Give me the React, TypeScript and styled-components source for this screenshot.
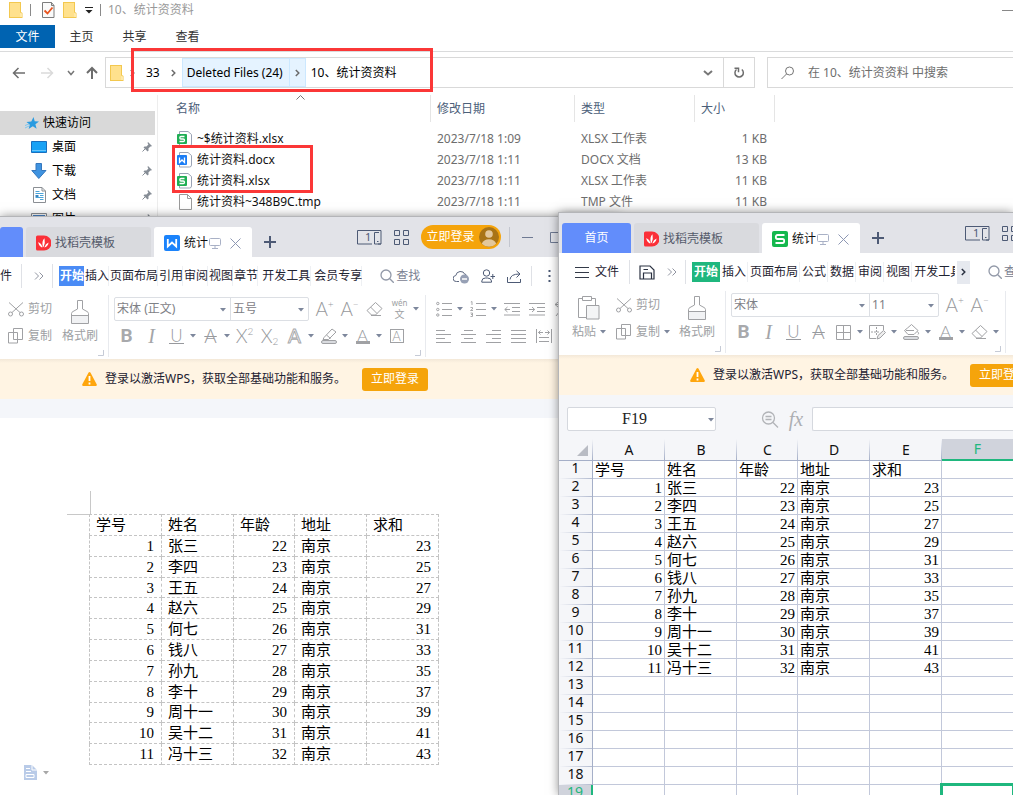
import React from 'react';
import styled, { createGlobalStyle, css } from 'styled-components';

const UI_FONT = '"Noto Sans", "Noto Sans CJK SC", sans-serif';
const SONG_FONT = '"Liberation Serif", "Noto Sans CJK SC", serif';
const ORANGE = '#f5a40b';
const GREEN = '#1fb77e';

const Global = createGlobalStyle`
  * { box-sizing: border-box; }
  body { margin: 0; background: #fff; font: 12px/16px ${UI_FONT}; color: #000; }
  button, input, select { font: inherit; color: inherit; margin: 0; padding: 0; border: 0; background: none; border-radius: 0; outline: 0; }
  button { display: inline-flex; align-items: center; justify-content: center; white-space: nowrap; }
  a { color: inherit; text-decoration: none; }
  svg { display: block; flex: none; }
`;

/* ---------- icons ---------- */

type IconProps = { w: number; h: number; color?: string; children: React.ReactNode; sw?: number };
const Icon = ({ w, h, color = '#a0a1a4', sw = 1, children }: IconProps) => (
  <svg width={w} height={h} viewBox={`0 0 ${w} ${h}`} fill="none" stroke={color} strokeWidth={sw} aria-hidden="true">
    {children}
  </svg>
);

const FolderIcon = () => (
  <Icon w={14} h={16} color="none">
    <path d="M0 0h12v10l1.500 1V16H0z" fill="#f3c84f" />
    <path d="M1 1h10v14H1z" fill="#ffe18d" />
    <path d="M11 10.5l2 1V15h-2z" fill="#ffe9a8" />
  </Icon>
);
const CheckFileIcon = () => (
  <Icon w={13} h={16} color="#7d7d7d">
    <path d="M.5.5h9l2.500 3v12H.5z" fill="#fafafa" />
    <path d="M9.500.5v3H12" />
    <path d="M2.500 8.500l3 3L10.500 5.500" stroke="#e8541e" strokeWidth="1.800" />
  </Icon>
);
const ChevronRight = ({ color = '#6b6b6b' }: { color?: string }) => (
  <Icon w={5} h={8} color={color} sw={1.5}><path d="M.8 1l3 3-3 3" /></Icon>
);
const ChevronDown = ({ w = 8, color = '#777' }: { w?: number; color?: string }) => (
  <Icon w={w} h={6} color={color} sw={w > 8 ? 2 : 1.5}><path d={`M1 1l${w / 2 - 1} 3.500L${w - 1} 1`} /></Icon>
);
const ArrowLeft = () => (
  <Icon w={13} h={12} color="#6d6d6d" sw={1.5}><path d="M13 6H1.500M6.500 1l-5 5 5 5" /></Icon>
);
const ArrowRight = () => (
  <Icon w={13} h={12} color="#dadada" sw={1.5}><path d="M0 6h11.500M6.500 1l5 5-5 5" /></Icon>
);
const ArrowUp = () => (
  <Icon w={12} h={13} color="#6d6d6d" sw={2}><path d="M6 13V2M1 7l5-5 5 5" /></Icon>
);
const RefreshIcon = () => (
  <Icon w={12} h={12} color="#6d6d6d" sw={1.5}>
    <path d="M8.800 2.500A4.200 4.200 0 1 1 3.500 2.500" /><path d="M1.500 1.200h4v4" />
  </Icon>
);
const SearchThin = () => (
  <Icon w={14} h={14} color="#767676"><circle cx="8.500" cy="5" r="4" /><path d="M5.500 8L.5 13" /></Icon>
);
const StarIcon = () => (
  <Icon w={14} h={13} color="none">
    <path d="M8.500 0l1.200 4.200 4.300.3-3.600 2.700 1.200 4.600-3.800-2.600L3.600 12l1.200-4.300L1.500 5l4.800-.6z" fill="#2a9be0" />
    <path d="M0 8.500l4-1.500M0 11l4-2" stroke="#7cc5f0" />
  </Icon>
);
const DesktopIcon = () => (
  <Icon w={16} h={12} color="#1a6fbe"><path d="M.5.5h15v11H.5z" fill="#19a2f5" /><path d="M1 9.500h14" stroke="#6cc6fb" /></Icon>
);
const DownloadIcon = () => (
  <Icon w={16} h={16} color="#3577bd"><path d="M5 .5h5.500v7H15l-7.200 8L.8 7.500H5z" fill="#3f93e0" /></Icon>
);
const DocIcon = () => (
  <Icon w={13} h={16} color="#8b8f94">
    <path d="M.5.5h8.500l3.500 3.500v11.500H.5z" fill="#fff" /><path d="M9 .5V4h3.500" />
    <path d="M2.500 4.500h4M2.500 6.500h8M7 8.500h3.500M2.500 10.500h8M7 12.500h3.500" stroke="#4aa3d8" />
    <path d="M2.500 8h3v2h-3z" fill="#3a86c0" stroke="none" />
  </Icon>
);
const PictureIcon = () => (
  <Icon w={16} h={12} color="#8b8f94"><path d="M.5.5h15v11H.5z" fill="#fff" /><path d="M2 2h12v8H2z" fill="#4b86c9" stroke="none" /></Icon>
);
const PinIcon = () => (
  <Icon w={10} h={10} color="none">
    <path d="M6 0l4 4-1 .6-.6-.2-2 2.200.2 1.900-1 1L1.500 5.400l1-1 2 .2L6.400 2.400 5.500 1z" fill="#868d96" />
    <path d="M3.500 6.500L.5 9.500" stroke="#868d96" />
  </Icon>
);

const SheetFileIcon = () => (
  <Icon w={15} h={16} color="none">
    <path d="M2.500.5H11l3.500 3V13q0 2-2 2h-10z" fill="#fff" stroke="#9aa3b5" />
    <rect x="0" y="3" width="10" height="10" rx="1" fill="#1fae54" />
    <path d="M7.500 5.500H4Q2.800 5.500 2.800 6.700T4 8h2.200Q7.500 8 7.500 9.200T6.200 10.500H2.500" stroke="#fff" strokeWidth="1.300" />
  </Icon>
);
const WordFileIcon = () => (
  <Icon w={15} h={16} color="none">
    <path d="M2.500.5H11l3.500 3V13q0 2-2 2h-10z" fill="#fff" stroke="#9aa3b5" />
    <rect x="0" y="3" width="10" height="10" rx="1" fill="#1b7df5" />
    <path d="M2.500 5.500v5L5 8l2.500 2.500v-5" stroke="#fff" strokeWidth="1.300" />
  </Icon>
);
const BlankFileIcon = () => (
  <Icon w={15} h={16} color="#9a9a9a"><path d="M2.500.5h8l4 4v11h-12z" fill="#fff" /><path d="M10.500.5v4h4" /></Icon>
);

const DocerLogo = () => (
  <Icon w={15} h={16} color="none">
    <path d="M1.500.5H8A7.500 7.500 0 0 1 8 15.500H1.500Q0 15.500 0 14V2Q0 .5 1.500.5z" fill="#fb3038" />
    <path d="M6.800 11.500Q5.500 6 8.500 3.200 9.500 8 7.600 12zM6 12.500Q2.500 10.500 2.300 7 5.500 8.500 6.600 12zM8.500 12.500q3.800-1.500 4-5-3 1-4 4.500z" fill="#fff" />
  </Icon>
);
const WriterLogo = () => (
  <Icon w={16} h={16} color="none">
    <rect width="16" height="16" rx="2" fill="#1b83fb" />
    <path d="M3.800 4v7.500L8 7.500l4.200 4V4" stroke="#fff" strokeWidth="1.800" />
  </Icon>
);
const SheetLogo = () => (
  <Icon w={16} h={16} color="none">
    <rect width="16" height="16" rx="2" fill="#15b84e" />
    <path d="M12.500 4H5.500Q3.800 4 3.800 6t1.700 2h5q1.700 0 1.700 2t-1.700 2h-7" stroke="#fff" strokeWidth="1.800" />
  </Icon>
);
const MonitorIcon = () => (
  <Icon w={12} h={12} color="#a9b1c6"><rect x=".5" y="1.500" width="11" height="7" rx="1" /><path d="M6 8.500v3M3 11.500h6" /></Icon>
);
const CloseIcon = () => <Icon w={11} h={11} color="#8d97b3"><path d="M.5.5l10 10M10.500.5l-10 10" /></Icon>;
const PlusIcon = () => <Icon w={12} h={12} color="#4d5a75" sw={2}><path d="M6 0v12M0 6h12" /></Icon>;
const DeviceIcon = () => (
  <Icon w={25} h={15} color="#4d5a75">
    <path d="M15 14H.5V.5h23.500V14h-3" /><path d="M22 2.500h-4.500V14h6.500M20 11.500h1.500" />
    <text x="8" y="11" fontSize="11" fill="#4d5a75" stroke="none">1</text>
  </Icon>
);
const GridIcon = () => (
  <Icon w={15} h={15} color="#4d5a75">
    <path d="M.5.5h5v5h-5zM9.500.5h5v5h-5zM.5 9.500h5v5h-5zM9.500 9.500h5v5h-5z" />
  </Icon>
);
const Avatar = () => (
  <Icon w={20} h={20} color="none">
    <circle cx="10" cy="10" r="10" fill="#a97416" /><circle cx="10" cy="7" r="3.800" fill="#e3c79a" />
    <path d="M2.800 16.800Q4.500 12.200 10 12.200t7.200 4.600A10 10 0 0 1 2.800 16.800z" fill="#e3c79a" />
  </Icon>
);
const MoreIcon = () => <Icon w={10} h={8} color="#9094a0"><path d="M1 .5l3.500 3.500L1 7.500M5.500.5L9 4 5.500 7.500" /></Icon>;
const HamburgerIcon = () => <Icon w={14} h={11} color="#333a48"><path d="M0 .5h14M0 5.500h14M0 10.500h14" /></Icon>;
const SaveIcon = () => (
  <Icon w={16} h={15} color="#2b3242" sw={1.2}><path d="M1 1h10l4 4v9H1zM4.500 14V8h8v6M4.500 4.500H9" /></Icon>
);
const SearchIcon = () => (
  <Icon w={14} h={14} color="#9299a8" sw={1.3}><circle cx="6" cy="6" r="5" /><path d="M9.800 9.800l4 4" /></Icon>
);
const CloudIcon = () => (
  <Icon w={16} h={15} color="#5d6880">
    <path d="M6 12.500H3.500A3 3 0 0 1 2.800 6.500 4.800 4.800 0 0 1 12 5.500" /><path d="M12 5q1.200.5 1.500 1.500" />
    <circle cx="11.500" cy="10" r="4.500" fill="#97a0b5" stroke="none" /><path d="M9 10h5" stroke="#fff" strokeWidth="1.500" />
  </Icon>
);
const UserAddIcon = () => (
  <Icon w={14} h={14} color="#4d5a75">
    <circle cx="5.500" cy="4" r="3.200" /><path d="M10.500 13.200H.8V12Q1 9 4.500 9h2q3.500 0 4 3zM9.500 7.500h4.500M11.800 5v5" />
  </Icon>
);
const ShareIcon = () => (
  <Icon w={14} h={13} color="#4d5a75"><path d="M.5 7v5.500h13V9M3 9.500Q3.500 4 12.500 4M9.500.8L13 4 9.500 7.500" /></Icon>
);
const ScissorsIcon = () => (
  <Icon w={16} h={15}><circle cx="2.500" cy="12" r="2" /><circle cx="13.500" cy="12" r="2" /><path d="M1 .5l11 10M15 .5L4 10.500" /></Icon>
);
const CopyIcon = () => (
  <Icon w={16} h={16}><path d="M5.500.5h9v11h-9z" /><path d="M.5 4.500h9v10.500h-9z" fill="#fff" /><path d="M5.500 4.500v7h4" /></Icon>
);
const BrushIcon = () => (
  <Icon w={18} h={24}>
    <path d="M1 15.500h16V23H1z" fill="#f1f2f4" stroke="none" />
    <path d="M6.500.5h5V9l4.500 2.500q1.500.8 1.500 2V23.500H.5v-10q0-1.200 1.500-2L6.500 9zM.5 15.500h17" />
  </Icon>
);
const PasteIcon = () => (
  <Icon w={22} h={24}>
    <path d="M4 2.500H.5v19h8M14 2.500h3.500V9M4.500.5h9v4h-9z" /><path d="M8.500 9.500h12.500v13.500H8.500z" fill="#f4f5f6" />
  </Icon>
);
const EraserIcon = () => (
  <Icon w={17} h={16}><path d="M1 9.500l8.500-8 6.500 6-6.500 6.500H5.500zM4.500 6l6.500 6.500" /><path d="M5 14.500h10" /></Icon>
);
const BulletsIcon = () => (
  <Icon w={16} h={16}>
    <path d="M6 2.500h10M6 8.500h10M6 14.500h10" /><circle cx="1.800" cy="2.500" r="1.200" /><circle cx="1.800" cy="8.500" r="1.200" /><circle cx="1.800" cy="14" r="1.200" />
  </Icon>
);
const NumbersIcon = () => (
  <Icon w={16} h={16}>
    <path d="M6 2.500h10M6 8.500h10M6 14.500h10" />
    <path d="M.8 1L2 .5V4M.5 6.500h2v1.500l-2 1.500h2.500M.5 12h2v3.500h-2M1 13.500h1.500" strokeWidth=".9" />
  </Icon>
);
const OutdentIcon = () => (
  <Icon w={16} h={14}><path d="M0 1.500h16M8 5.500h8M8 9.500h8M0 13h16M6 7.500H.8M3.500 5L.8 7.500 3.500 10" /></Icon>
);
const IndentIcon = () => (
  <Icon w={16} h={14}><path d="M0 1.500h16M8 5.500h8M8 9.500h8M0 13h16M0 7.500h5.500M3 5l2.700 2.500L3 10" /></Icon>
);
const DirectionIcon = () => <Icon w={16} h={15}><path d="M10 2.500H1M4 0L1 2.500 4 5M12 1L2 14M7 7l6 7" /></Icon>;
const AlignIcon = ({ lines }: { lines: [number, number][] }) => (
  <Icon w={15} h={14}>{lines.map(([a, b], i) => <path key={i} d={`M${a} ${i * 4 + 1}.500H${b}`} />)}</Icon>
);
const DistributeIcon = () => (
  <Icon w={16} h={14}><path d="M.5 0v14M15.500 0v14M3 8.500h10M3 12.500h10M2.500 3.500H7M9 3.500h4.500M4.500 1.500l-2 2 2 2M11.500 1.500l2 2-2 2" /></Icon>
);
const HighlightIcon = () => (
  <Icon w={16} h={16}><path d="M3 9.500l8-8.500 4 3-7.500 7.500H2zM5.500 7l4 3.500" /><rect x=".5" y="12.500" width="15" height="3" rx="1.500" fill="#d9dbdf" /></Icon>
);
const BordersIcon = () => <Icon w={15} h={15}><path d="M.5.5h14v14H.5zM7.500 0v15M0 7.500h15" /></Icon>;
const CellStyleIcon = () => (
  <Icon w={17} h={15}>
    <path d="M7 13.500H.5V.5h14V5" /><path d="M2 7h8M7.500 2v8" strokeDasharray="2 1" />
    <path d="M8 14l1-3.500 5.500-5 2 2-5.500 5.500z" fill="#eee" />
  </Icon>
);
const FillIcon = () => (
  <Icon w={17} h={16}>
    <path d="M4.500 4l4-3.500L15 6.500 11 10.500H5L1.500 6.500z" /><path d="M3 6.500h8M14.500 7.500q2 2 .5 3" />
    <rect x=".5" y="12.500" width="15" height="3" rx="1.500" fill="#d9dbdf" />
  </Icon>
);
const WarnIcon = () => (
  <Icon w={15} h={14} color="none">
    <path d="M6.600.6q.9-1.200 1.800 0L14.800 12.500Q15 14 13.800 14H1.200Q0 14 .2 12.500z" fill="#ffa60d" />
    <path d="M7.500 4v5M7.500 10.500v2" stroke="#fff" strokeWidth="1.800" />
  </Icon>
);
const Caret = ({ color = '#7d879c' }: { color?: string }) => (
  <Icon w={6} h={4} color="none"><path d="M0 0h6L3 3.500z" fill={color} /></Icon>
);
const CornerIcon = () => <Icon w={6} h={6} color="#c6cbd6"><path d="M0 5.500h5.500V0" /></Icon>;
const ZoomOutIcon = () => (
  <Icon w={18} h={17} color="#b2b4b8" sw={1.3}><circle cx="7.500" cy="7" r="6" /><path d="M4.500 5.500h6M4.500 8.500h6M12 11.500l5 5" /></Icon>
);
const PasteOptionsIcon = () => (
  <Icon w={13} h={15} color="none">
    <path d="M0 0h8l5 5v10H0z" fill="#b9cbe8" /><path d="M8 0v5h5M2 3.500h4M2 6.500h5M2 9.500h8v3H2z" stroke="#fff" />
  </Icon>
);

/* ---------- desktop and Explorer ---------- */

const Desktop = styled.div`
  position: relative; height: 100vh; overflow: hidden; background: #fff;
`;
const ExplorerTitle = styled.header`
  display: flex; align-items: center; height: 20px; padding-left: 9px; color: #999; gap: 7px;
`;
const Spacer = styled.div`flex: 1;`;
const VLine = styled.span<{ $h?: number; $c?: string; $l?: number; $r?: number }>`
  flex: none; width: 1px; height: ${p => p.$h ?? 12}px; background: ${p => p.$c ?? '#8a8a8a'};
  margin: 0 ${p => p.$r ?? 0}px 0 ${p => p.$l ?? 0}px;
`;
const QuickButtons = styled.div`display: flex; align-items: center; gap: 8px; padding-left: 4px;`;
const MinButton = styled.button`width: 11px; height: 16px;`;
const ExplorerTabs = styled.nav`
  display: flex; height: 27px; margin-top: 5px; border-bottom: 1px solid #dadbdc;
`;
const ExplorerTab = styled.button<{ $file?: boolean }>`
  width: ${p => (p.$file ? 55 : 53)}px; height: 23px; color: #333;
  ${p => p.$file && css`background: #0063b1; color: #fff;`}
`;
const AddressRow = styled.div`display: flex; height: 31px; margin-top: 5px;`;
const NavButtons = styled.div`
  display: flex; align-items: center; width: 105px; padding-left: 12px;
  & > :nth-child(2) { margin-left: 16px; }
  & > :nth-child(3) { margin-left: 13px; }
  & > :nth-child(4) { margin-left: 11px; }
`;
const AddressBox = styled.div`
  display: flex; align-items: center; flex: 1; min-width: 0; border: 1px solid #d9d9d9; padding-left: 4px;
`;
const Crumbs = styled.nav`display: flex; align-items: center; height: 100%; flex: 1; white-space: nowrap;`;
const Crumb = styled.a<{ $hot?: boolean }>`
  display: flex; align-items: center; height: 29px; padding: 0 5px;
  ${p => p.$hot && css`background: #e5f3ff; border: 1px solid #cce8ff; padding: 0 6px 0 4px;`}
`;
const CrumbArrow = styled.span<{ $hot?: boolean }>`
  display: flex; align-items: center; justify-content: center; height: 29px; width: ${p => (p.$hot ? 16 : 17)}px;
  ${p => p.$hot && css`background: #e5f3ff; border: 1px solid #cce8ff; border-left: 0;`}
`;
const BoxButton = styled.button<{ $line?: boolean }>`
  width: 31px; height: 29px; ${p => p.$line && css`border-left: 1px solid #d9d9d9;`}
`;
const SearchBox = styled.label`
  display: flex; align-items: center; gap: 13px; width: 246px; margin-left: 12px; padding-left: 13px;
  border: 1px solid #d9d9d9; border-right: 0;
  input { flex: 1; min-width: 0; }
  input::placeholder { color: #6d6d6d; opacity: 1; }
`;
const ExplorerBody = styled.div`display: flex; margin-top: 7px;`;
const Sidebar = styled.aside`width: 158px; padding: 16px 2px 0 0; border-right: 1px solid #ededed;`;
const SideRoot = styled.a`
  display: flex; align-items: center; gap: 4px; height: 24px; padding-left: 25px; background: #d9d9d9;
`;
const SideItem = styled.a`
  display: grid; grid-template-columns: 16px 1fr 10px; align-items: center; column-gap: 5px;
  height: 24px; padding: 0 3px 0 31px;
  svg { justify-self: center; }
`;
const FileTable = styled.table`
  border-collapse: separate; border-spacing: 0; table-layout: fixed; width: 617px; align-self: flex-start;
  tbody::before { content: ''; display: block; height: 6px; }
`;
const HeadCell = styled.th<{ $w: number }>`
  position: relative; width: ${p => p.$w}px; height: 27px; padding: 0 6px; text-align: left; font-weight: 400; color: #4c607a;
  border-right: 1px solid #e5e5e5;
  &:first-child { padding-left: 18px; }
`;
const SortMark = styled.span`position: absolute; top: 0; left: 138px;`;
const FileCell = styled.td<{ $right?: boolean }>`
  height: 21px; padding: 0 8px 0 6px; color: #6d6d6d; white-space: nowrap; text-align: ${p => (p.$right ? 'right' : 'left')};
`;
const FileName = styled.a`
  display: flex; align-items: center; gap: 5px; padding-left: 13px; color: #111;
`;
const Marker = styled.div<{ $x: number; $y: number; $w: number; $h: number }>`
  position: absolute; left: ${p => p.$x}px; top: ${p => p.$y}px; width: ${p => p.$w}px; height: ${p => p.$h}px;
  border: 3px solid #fb3737; pointer-events: none;
`;

/* ---------- WPS windows ---------- */

const WpsWindow = styled.section<{ $x: number; $y: number; $w?: number }>`
  position: absolute; left: ${p => p.$x}px; top: ${p => p.$y}px; bottom: 0;
  ${p => (p.$w ? css`width: ${p.$w}px;` : css`right: 0;`)}
  display: flex; flex-direction: column; background: #fff; overflow: hidden;
  box-shadow: 0 0 0 1px #b4b5b8, 0 0 10px rgba(0, 0, 0, 0.5);
`;
const TitleBar = styled.header`
  display: flex; align-items: flex-end; flex: none; height: 40px; background: #e2e3e8;
`;
const HomeTab = styled.button<{ $w: number; $l?: number }>`
  flex: none; width: ${p => p.$w}px; margin-left: ${p => p.$l ?? 0}px; height: 30px; background: #628dfb; color: #fff; border-radius: 3px 3px 0 0;
`;
const DocTab = styled.button<{ $active?: boolean; $w: number }>`
  flex: none; justify-content: flex-start; gap: 4px; width: ${p => p.$w}px; height: 30px; margin-left: 3px; padding: 2px 10px 0;
  border-radius: 3px 3px 0 0; background: ${p => (p.$active ? '#fff' : '#d9dade')}; color: ${p => (p.$active ? '#111' : '#555b6b')};
  & > :nth-child(3) { margin-left: -3px; }
  & > :nth-child(4) { margin-left: 5px; }
`;
const NewTab = styled.button`flex: none; width: 35px; height: 30px;`;
const TitleTools = styled.div`
  display: flex; align-items: center; gap: 12px; height: 40px; margin-left: 70px; flex: none;
`;
const LoginPill = styled.button`
  gap: 4px; width: 80px; height: 24px; padding-left: 3px; border-radius: 12px; background: ${ORANGE}; color: #fff;
`;
const MenuRow = styled.div<{ $l: number }>`
  display: flex; align-items: center; flex: none; height: 38px; padding-left: ${p => p.$l}px; color: #1f2432; white-space: nowrap;
`;
const MenuButton = styled.button<{ $l?: number; $gap?: number; $c?: string }>`
  flex: none; gap: ${p => p.$gap ?? 0}px; margin-left: ${p => p.$l ?? 0}px; height: 24px; color: ${p => p.$c ?? 'inherit'};
`;
const RibbonTabs = styled.nav<{ $w?: number }>`
  display: flex; flex: none; overflow: hidden; ${p => p.$w && css`width: ${p.$w}px;`}
`;
const RibbonTab = styled.button<{ $active?: string; $l: number; $r: number }>`
  flex: none; height: 20px; padding: 0 ${p => p.$r}px 0 ${p => p.$l}px; box-shadow: inset -1px 0 #eef0f3;
  ${p => p.$active && css`background: ${p.$active}; color: #fff; font-weight: 700; box-shadow: none;`}
`;
const MoreTabs = styled.button`flex: none; width: 13px; height: 23px; margin-left: 2px; background: #e6e9ef;`;
const Ribbon = styled.div`
  display: flex; flex: none; height: 64px; padding-bottom: 2px; color: #9d9fa3; white-space: nowrap;
`;
const Group = styled.div<{ $l: number; $r?: number; $last?: boolean }>`
  position: relative; display: flex; flex: none; padding: 1px ${p => p.$r ?? 0}px 0 ${p => p.$l}px;
  border-right: ${p => (p.$last ? 'none' : '1px solid #e8eaee')};
`;
const Corner = styled.span`position: absolute; right: 4px; bottom: 1px;`;
const Stack = styled.div`display: flex; flex-direction: column; gap: 1px;`;
const Line = styled.div`display: flex; align-items: center; height: 26px;`;
const SmallButton = styled.button<{ $l?: number }>`
  gap: 4px; height: 26px; justify-content: flex-start; margin-left: ${p => p.$l ?? 0}px;
`;
const BigButton = styled.button<{ $l: number }>`
  flex-direction: column; align-items: center; justify-content: flex-start; gap: 4px; margin-left: ${p => p.$l}px; padding-top: 4px; height: 53px;
`;
const Label = styled.span`display: flex; align-items: center; gap: 4px;`;
const Tool = styled.button<{ $l?: number; $caret?: boolean }>`
  flex: none; display: grid; grid-template-columns: 25px ${p => (p.$caret ? '9px' : '')}; align-items: center; height: 26px;
  margin-left: ${p => p.$l ?? 0}px; justify-items: center;
  & > svg:nth-child(2) { justify-self: start; margin-left: 1px; }
`;
const Glyph = styled.span<{ $bold?: boolean; $italic?: boolean; $line?: string; $outline?: boolean; $box?: boolean; $bar?: boolean }>`
  font: 300 19px/20px Lato, sans-serif; color: #97999d;
  ${p => p.$bold && css`font: 700 19px/20px Roboto, sans-serif; color: #a8a9ac;`}
  ${p => p.$italic && css`font: italic 400 20px/20px "Liberation Serif", serif; color: #a4a5a8;`}
  ${p => p.$line === 'under' && css`font-size: 17px; line-height: 14px; padding: 0 1px; border-bottom: 1px solid #97999d;`}
  ${p => p.$line === 'through' && css`text-decoration: line-through; text-decoration-thickness: 1px;`}
  ${p => p.$outline && css`color: #fff; font-weight: 400; -webkit-text-stroke: 1px #a8a9ac;`}
  ${p => p.$box && css`width: 14px; font-size: 13px; line-height: 12px; border: 1px solid #a0a1a4; text-align: center;`}
  ${p => p.$bar && css`width: 14px; text-align: center; font-size: 16px; line-height: 12px; border-bottom: 3px solid #a0a1a4;`}
  sup, sub { font-size: 10px; line-height: 0; }
  sup { vertical-align: 8px; }
  sub { vertical-align: -2px; }
`;
const Pinyin = styled.span`
  display: flex; flex-direction: column; align-items: center; font-size: 8px; line-height: 10px;
  span { font-size: 10px; line-height: 12px; }
`;
const FontBox = styled.div`
  display: flex; height: 24px; border: 1px solid #dcdfe4; border-radius: 2px;
`;
const Picker = styled.div<{ $w: number }>`
  position: relative; width: ${p => p.$w}px;
  & + & { border-left: 1px solid #dcdfe4; }
  select { appearance: none; width: 100%; height: 22px; padding-left: 2px; color: #7e8085; }
  svg { position: absolute; right: 4px; top: 10px; }
`;
const Notice = styled.div<{ $l: number }>`
  display: flex; align-items: center; flex: none; height: 40px; padding-left: ${p => p.$l}px; white-space: nowrap; color: #1c2130;
  background: linear-gradient(#f3e8d8, #fff4e3 4px);
`;
const NoticeText = styled.span`flex: none; margin-left: 8px; width: 257px;`;
const LoginButton = styled.button`
  flex: none; width: 66px; height: 23px; border-radius: 3px; background: ${ORANGE}; color: #fff;
`;
const DocCanvas = styled.main`
  flex: 1; padding-top: 19px; background: #f4f6fa;
`;
const Paper = styled.div`min-height: 100%; padding: 73px 0 0 67px; background: #fff;`;
const CropMark = styled.div`width: 24px; height: 23px; border-right: 1px solid #c8c8c8;`;
const CropLine = styled.div`width: 22px; height: 1px; background: #c8c8c8;`;
const TableRow = styled.div`display: flex; align-items: flex-start;`;
const DocTable = styled.table`
  width: 350px; height: 251px; table-layout: fixed; border-collapse: collapse; font: 15px/18px ${SONG_FONT};
  th, td { padding: 0 6px; border: 1px dashed #c4c4c4; font-weight: 400; text-align: left; white-space: nowrap; }
  th { height: 21px; }
  td:nth-child(odd) { padding-right: 7px; text-align: right; }
`;
const PasteOptions = styled.button`gap: 6px; margin: 0 0 0 -43px;`;
const FormulaBar = styled.div`
  display: flex; align-items: center; flex: none; height: 44px; padding: 4px 0 0 8px; background: #f5f6f9;
`;
const NameBox = styled.label`
  position: relative; width: 149px; height: 24px;
  input { width: 100%; height: 24px; padding-right: 14px; text-align: center; background: #fff; border: 1px solid #d5d8de; border-radius: 2px; font: 16px/20px ${SONG_FONT}; color: #222; }
  svg { position: absolute; right: 2px; top: 11px; }
`;
const Fx = styled.button`
  width: 26px; margin: 0 3px 0 4px; font: italic 20px/24px "Liberation Serif", serif; color: #adafb3;
`;
const FormulaInput = styled.input`
  flex: 1; min-width: 0; height: 24px; background: #fff; border: 1px solid #d5d8de; border-right: 0; border-radius: 2px 0 0 2px;
`;
const Iconic = styled.button<{ $l: number }>`flex: none; margin-left: ${p => p.$l}px;`;
const Grid = styled.table`
  width: 100%; table-layout: fixed; border-collapse: separate; border-spacing: 0; background: #fff;
`;
const ColHead = styled.th<{ $w?: number; $on?: boolean }>`
  ${p => p.$w && css`width: ${p.$w}px;`}
  height: 22px; padding: 0; font: 14px/18px ${UI_FONT}; color: ${p => (p.$on ? GREEN : '#111')};
  border-bottom: ${p => (p.$on ? `2px solid ${GREEN}` : '1px solid #a5afc8')};
  background: ${p => (p.$on ? '#d0d3dc' : 'linear-gradient(#f5f6f9, #a5afc8) right / 1px 100% no-repeat, #f5f6f9')};
  svg { margin: 3px 4px 0 auto; }
`;
const RowHead = styled.th<{ $on?: boolean }>`
  height: 18px; padding: 0 0 4px; font: 14px/14px ${UI_FONT}; color: ${p => (p.$on ? GREEN : '#111')};
  border-right: ${p => (p.$on ? `2px solid ${GREEN}` : '1px solid #a5afc8')};
  background: ${p => (p.$on ? '#d0d3dc' : 'linear-gradient(90deg, #f5f6f9, #b3bbd0) bottom / 100% 1px no-repeat, #f5f6f9')};
`;
const Cell = styled.td<{ $num?: boolean; $on?: boolean }>`
  height: 18px; padding: 2px 2px 0; font: 15px/15px ${SONG_FONT}; white-space: nowrap;
  text-align: ${p => (p.$num ? 'right' : 'left')};
  border-right: 1px solid #c2c8da; border-bottom: 1px solid #c2c8da;
  &:last-child { border-right: 0; }
  ${p => p.$on && css`outline: 3px solid ${GREEN}; outline-offset: -1px;`}
`;

const HEAD = ['学号', '姓名', '年龄', '地址', '求和'];
const NAMES = ['张三', '李四', '王五', '赵六', '何七', '钱八', '孙九', '李十', '周十一', '吴十二', '冯十三'];
const ROWS = NAMES.map((n, i) => [`${i + 1}`, n, `${22 + i}`, '南京', `${23 + 2 * i}`]);
const COLS = [72, 72, 61, 72, 72];

const FILES = [
  { icon: <SheetFileIcon />, name: '~$统计资料.xlsx', date: '2023/7/18 1:09', type: 'XLSX 工作表', size: '1 KB' },
  { icon: <WordFileIcon />, name: '统计资料.docx', date: '2023/7/18 1:11', type: 'DOCX 文档', size: '13 KB' },
  { icon: <SheetFileIcon />, name: '统计资料.xlsx', date: '2023/7/18 1:11', type: 'XLSX 工作表', size: '11 KB' },
  { icon: <BlankFileIcon />, name: '统计资料~348B9C.tmp', date: '2023/7/18 1:11', type: 'TMP 文件', size: '11 KB' },
];
const PLACES = [
  { icon: <DesktopIcon />, name: '桌面' },
  { icon: <DownloadIcon />, name: '下载' },
  { icon: <DocIcon />, name: '文档' },
  { icon: <PictureIcon />, name: '图片' },
];

const Explorer = () => (
  <section>
    <ExplorerTitle>
      <FolderIcon /><VLine />
      <QuickButtons><CheckFileIcon /><FolderIcon />
        <Icon w={8} h={7} color="#222"><path d="M0 .5h8" /><path d="M.5 3h7L4 6.500z" fill="#222" stroke="none" /></Icon>
      </QuickButtons>
      <VLine /><span>10、统计资资料</span>
      <Spacer />
      <MinButton aria-label="最小化"><Icon w={11} h={1} color="#888"><path d="M0 .5h11" /></Icon></MinButton>
    </ExplorerTitle>
    <ExplorerTabs>
      <ExplorerTab $file>文件</ExplorerTab><ExplorerTab>主页</ExplorerTab><ExplorerTab>共享</ExplorerTab><ExplorerTab>查看</ExplorerTab>
    </ExplorerTabs>
    <AddressRow>
      <NavButtons>
        <button aria-label="后退"><ArrowLeft /></button>
        <button aria-label="前进"><ArrowRight /></button>
        <button aria-label="历史"><ChevronDown /></button>
        <button aria-label="上移"><ArrowUp /></button>
      </NavButtons>
      <AddressBox>
        <FolderIcon />
        <Crumbs>
          <CrumbArrow><ChevronRight /></CrumbArrow>
          <Crumb href="#">33</Crumb>
          <CrumbArrow><ChevronRight /></CrumbArrow>
          <Crumb href="#" $hot>Deleted Files (24)</Crumb>
          <CrumbArrow $hot><ChevronRight /></CrumbArrow>
          <Crumb href="#">10、统计资资料</Crumb>
        </Crumbs>
        <BoxButton aria-label="展开"><ChevronDown w={10} /></BoxButton>
        <BoxButton $line aria-label="刷新"><RefreshIcon /></BoxButton>
      </AddressBox>
      <SearchBox><SearchThin /><input aria-label="搜索" placeholder="在 10、统计资资料 中搜索" /></SearchBox>
    </AddressRow>
    <ExplorerBody>
      <Sidebar>
        <SideRoot href="#"><StarIcon />快速访问</SideRoot>
        {PLACES.map(p => <SideItem href="#" key={p.name}>{p.icon}<span>{p.name}</span><PinIcon /></SideItem>)}
      </Sidebar>
      <FileTable>
        <thead><tr>
          <HeadCell $w={273}>名称<SortMark><Icon w={9} h={5} color="#777"><path d="M.5 4.500l4-4 4 4" /></Icon></SortMark></HeadCell>
          <HeadCell $w={144}>修改日期</HeadCell><HeadCell $w={120}>类型</HeadCell><HeadCell $w={80}>大小</HeadCell>
        </tr></thead>
        <tbody>
          {FILES.map(f => (
            <tr key={f.name}>
              <FileCell><FileName href="#">{f.icon}{f.name}</FileName></FileCell>
              <FileCell>{f.date}</FileCell><FileCell>{f.type}</FileCell><FileCell $right>{f.size}</FileCell>
            </tr>
          ))}
        </tbody>
      </FileTable>
    </ExplorerBody>
  </section>
);

const TabStrip = ({ home, logo }: { home?: string; logo: React.ReactNode }) => (
  <>
    <HomeTab $w={home ? 69 : 23} $l={home ? 3 : 0} aria-label="首页">{home}</HomeTab>
    <DocTab $w={125}><DocerLogo />找稻壳模板</DocTab>
    <DocTab $w={98} $active>{logo}<span>统计</span><MonitorIcon /><CloseIcon /></DocTab>
    <NewTab aria-label="新建"><PlusIcon /></NewTab>
  </>
);

const LoginNotice = ({ inset }: { inset: number }) => (
  <Notice $l={inset}>
    <WarnIcon /><NoticeText>登录以激活WPS，获取全部基础功能和服务。</NoticeText><LoginButton>立即登录</LoginButton>
  </Notice>
);

const FontPicker = ({ font, size, w1, w2 }: { font: string; size: string; w1: number; w2: number }) => (
  <FontBox>
    <Picker $w={w1}><select aria-label="字体"><option>{font}</option></select><Caret /></Picker>
    <Picker $w={w2}><select aria-label="字号"><option>{size}</option></select><Caret /></Picker>
  </FontBox>
);

const Writer = () => (
  <WpsWindow $x={0} $y={217} $w={620}>
    <TitleBar>
      <TabStrip logo={<WriterLogo />} />
      <TitleTools>
        <DeviceIcon /><GridIcon />
        <LoginPill>立即登录<Avatar /></LoginPill>
        <VLine $h={20} $c="#c3c6cf" $l={-4} />
        <Icon w={11} h={1} color="#6f7a93"><path d="M0 .5h11" /></Icon>
        <VLine $h={0} $l={-8} />
        <Icon w={11} h={11} color="#6f7a93"><path d="M.5.5h10v10H.5z" /></Icon>
      </TitleTools>
    </TitleBar>
    <MenuRow $l={0}>
      <MenuButton>件</MenuButton>
      <VLine $h={24} $c="#dfe1e6" $l={9} $r={12} />
      <MoreIcon />
      <VLine $h={24} $c="#dfe1e6" $l={8} $r={6} />
      <RibbonTabs>
        <RibbonTab $active="#4a8bf5" $l={1} $r={0}>开始</RibbonTab>
        {['插入', '页面布局', '引用', '审阅', '视图', '章节'].map(t => <RibbonTab key={t} $l={1} $r={0}>{t}</RibbonTab>)}
        <RibbonTab $l={4} $r={1}>开发工具</RibbonTab>
        <RibbonTab $l={3} $r={0}>会员专享</RibbonTab>
      </RibbonTabs>
      <MenuButton $l={18} $gap={2} $c="#7a8191"><SearchIcon />查找</MenuButton>
      <MenuButton $l={33} aria-label="云同步"><CloudIcon /></MenuButton>
      <MenuButton $l={12} aria-label="协作"><UserAddIcon /></MenuButton>
      <MenuButton $l={12} aria-label="分享"><ShareIcon /></MenuButton>
      <VLine $h={20} $c="#dfe1e6" $l={10} $r={16} />
      <Icon w={3} h={12} color="#4d5a75" sw={2}><path d="M1.500 0v2M1.500 5v2M1.500 10v2" /></Icon>
    </MenuRow>
    <Ribbon>
      <Group $l={8} $r={10}>
        <Stack>
          <SmallButton><ScissorsIcon />剪切</SmallButton>
          <SmallButton><CopyIcon />复制</SmallButton>
        </Stack>
        <BigButton $l={10}><BrushIcon /><Label>格式刷</Label></BigButton>
        <Corner><CornerIcon /></Corner>
      </Group>
      <Group $l={5} $r={4}>
        <Stack>
          <Line>
            <FontPicker font="宋体 (正文)" size="五号" w1={115} w2={78} />
            <Tool $l={3}><Glyph>A<sup>+</sup></Glyph></Tool>
            <Tool><Glyph>A<sup>−</sup></Glyph></Tool>
            <Tool aria-label="清除格式"><EraserIcon /></Tool>
            <Tool $caret><Pinyin>wén<span>文</span></Pinyin><Caret /></Tool>
          </Line>
          <Line>
            <Tool><Glyph $bold>B</Glyph></Tool>
            <Tool><Glyph $italic>I</Glyph></Tool>
            <Tool $caret><Glyph $line="under">U</Glyph><Caret /></Tool>
            <Tool $caret><Glyph $line="through">A</Glyph><Caret /></Tool>
            <Tool><Glyph>X<sup>2</sup></Glyph></Tool>
            <Tool><Glyph>X<sub>2</sub></Glyph></Tool>
            <Tool $caret><Glyph $outline>A</Glyph><Caret /></Tool>
            <Tool $caret aria-label="突出显示"><HighlightIcon /><Caret /></Tool>
            <Tool $caret><Glyph $bar>A</Glyph><Caret /></Tool>
            <Tool><Glyph $box>A</Glyph></Tool>
          </Line>
        </Stack>
        <Corner><CornerIcon /></Corner>
      </Group>
      <Group $l={5} $last>
        <Stack>
          <Line>
            <Tool $caret aria-label="项目符号"><BulletsIcon /><Caret /></Tool>
            <Tool $caret aria-label="编号"><NumbersIcon /><Caret /></Tool>
            <Tool aria-label="减少缩进"><OutdentIcon /></Tool>
            <Tool aria-label="增加缩进"><IndentIcon /></Tool>
            <Tool aria-label="文字方向"><DirectionIcon /></Tool>
          </Line>
          <Line>
            <Tool aria-label="左对齐"><AlignIcon lines={[[0, 9], [0, 15], [0, 9], [0, 15]]} /></Tool>
            <Tool aria-label="居中"><AlignIcon lines={[[3, 12], [0, 15], [3, 12], [0, 15]]} /></Tool>
            <Tool aria-label="右对齐"><AlignIcon lines={[[6, 15], [0, 15], [6, 15], [0, 15]]} /></Tool>
            <Tool aria-label="两端对齐"><AlignIcon lines={[[0, 15], [0, 15], [0, 15], [0, 15]]} /></Tool>
            <Tool aria-label="分散对齐"><DistributeIcon /></Tool>
          </Line>
        </Stack>
      </Group>
    </Ribbon>
    <LoginNotice inset={82} />
    <DocCanvas>
      <Paper>
        <CropMark />
        <TableRow>
          <CropLine />
          <DocTable>
            <colgroup>{COLS.map((w, i) => <col key={i} width={w} />)}</colgroup>
            <thead><tr>{HEAD.map(h => <th key={h}>{h}</th>)}</tr></thead>
            <tbody>{ROWS.map(r => <tr key={r[0]}>{r.map((c, i) => <td key={i}>{c}</td>)}</tr>)}</tbody>
          </DocTable>
        </TableRow>
        <PasteOptions aria-label="粘贴选项"><PasteOptionsIcon /><Caret color="#a7a7a7" /></PasteOptions>
      </Paper>
    </DocCanvas>
  </WpsWindow>
);

const Sheet = () => (
  <WpsWindow $x={559} $y={213}>
    <TitleBar>
      <TabStrip home="首页" logo={<SheetLogo />} />
      <TitleTools><DeviceIcon /><GridIcon /></TitleTools>
    </TitleBar>
    <MenuRow $l={16}>
      <MenuButton $gap={6}><HamburgerIcon />文件</MenuButton>
      <VLine $h={24} $c="#dfe1e6" $l={10} $r={9} />
      <MenuButton aria-label="保存"><SaveIcon /></MenuButton>
      <MenuButton $l={12} aria-label="更多"><MoreIcon /></MenuButton>
      <VLine $h={24} $c="#dfe1e6" $l={8} $r={6} />
      <RibbonTabs $w={263}>
        {['开始', '插入', '页面布局', '公式', '数据', '审阅', '视图', '开发工具'].map((t, i) => (
          <RibbonTab key={t} $l={2} $r={2} $active={i === 0 ? GREEN : undefined}>{t}</RibbonTab>
        ))}
      </RibbonTabs>
      <MoreTabs aria-label="更多选项卡"><ChevronRight color="#2b3242" /></MoreTabs>
      <MenuButton $l={18} $gap={2} $c="#7a8191"><SearchIcon />查找</MenuButton>
    </MenuRow>
    <Ribbon>
      <Group $l={13} $r={10}>
        <BigButton $l={0}><PasteIcon /><Label>粘贴<Caret /></Label></BigButton>
        <Stack>
          <SmallButton $l={10}><ScissorsIcon />剪切</SmallButton>
          <SmallButton $l={10}><CopyIcon />复制<Caret /></SmallButton>
        </Stack>
        <BigButton $l={9}><BrushIcon /><Label>格式刷</Label></BigButton>
        <Corner><CornerIcon /></Corner>
      </Group>
      <Group $l={5} $r={4}>
        <Stack>
          <Line>
            <FontPicker font="宋体" size="11" w1={137} w2={69} />
            <Tool $l={3}><Glyph>A<sup>+</sup></Glyph></Tool>
            <Tool><Glyph>A<sup>−</sup></Glyph></Tool>
          </Line>
          <Line>
            <Tool><Glyph $bold>B</Glyph></Tool>
            <Tool><Glyph $italic>I</Glyph></Tool>
            <Tool><Glyph $line="under">U</Glyph></Tool>
            <Tool><Glyph $line="through">A</Glyph></Tool>
            <Tool $caret aria-label="边框"><BordersIcon /><Caret /></Tool>
            <Tool $caret aria-label="绘图边框"><CellStyleIcon /><Caret /></Tool>
            <Tool $caret aria-label="填充颜色"><FillIcon /><Caret /></Tool>
            <Tool $caret><Glyph $bar>A</Glyph><Caret /></Tool>
            <Tool $caret aria-label="清除"><EraserIcon /><Caret /></Tool>
          </Line>
        </Stack>
        <Corner><CornerIcon /></Corner>
      </Group>
    </Ribbon>
    <LoginNotice inset={131} />
    <FormulaBar>
      <NameBox><input aria-label="名称框" defaultValue="F19" /><Caret /></NameBox>
      <Iconic $l={45} aria-label="缩小"><ZoomOutIcon /></Iconic>
      <Fx>fx</Fx>
      <FormulaInput aria-label="编辑栏" />
    </FormulaBar>
    <Grid>
      <thead><tr>
        <ColHead $w={34}><Icon w={12} h={12} color="none"><path d="M11 0v11H0z" fill="#b9bcc4" /></Icon></ColHead>
        {COLS.map((w, i) => <ColHead key={i} $w={w}>{'ABCDE'[i]}</ColHead>)}
        <ColHead $on>F</ColHead>
      </tr></thead>
      <tbody>
        {Array.from({ length: 19 }, (_, r) => {
          const data = r === 0 ? HEAD : ROWS[r - 1] ?? [];
          return (
            <tr key={r}>
              <RowHead $on={r === 18}>{r + 1}</RowHead>
              {COLS.map((_w, c) => <Cell key={c} $num={r > 0 && c % 2 === 0}>{data[c]}</Cell>)}
              <Cell $on={r === 18} />
            </tr>
          );
        })}
      </tbody>
    </Grid>
  </WpsWindow>
);

export default function App() {
  return (
    <Desktop>
      <Global />
      <Explorer />
      <Marker $x={131} $y={48} $w={302} $h={44} />
      <Marker $x={172} $y={145} $w={141} $h={48} />
      <Writer />
      <Sheet />
    </Desktop>
  );
}
